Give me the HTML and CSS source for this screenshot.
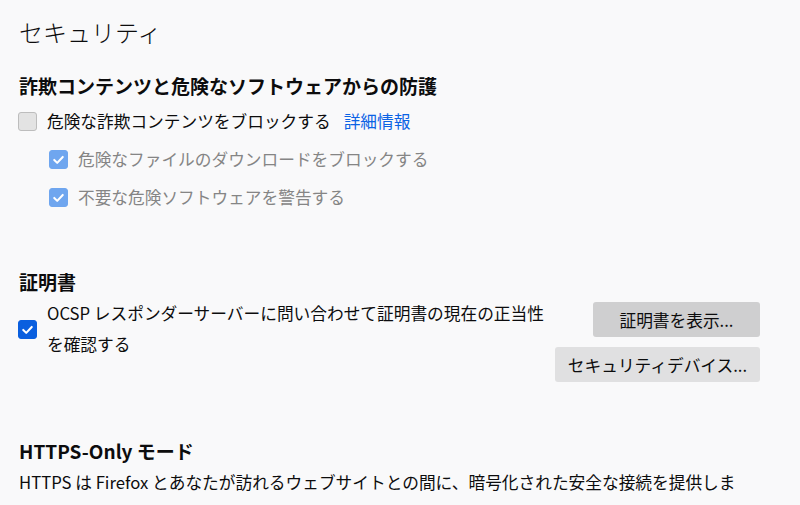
FILE: index.html
```html
<!DOCTYPE html>
<html lang="ja">
<head>
  <meta charset="UTF-8">
  <title>セキュリティ</title>
  <link rel="stylesheet" href="styles.css">
</head>
<body>

  <h1 class="page-title">セキュリティ</h1>

  <!-- 詐欺コンテンツ -->
  <h2 class="section-title first">詐欺コンテンツと危険なソフトウェアからの防護</h2>

  <div class="option">
    <span class="checkbox"></span>
    <span class="label">危険な詐欺コンテンツをブロックする</span>
    <a class="link" href="#">詳細情報</a>
  </div>
  <div class="option sub disabled">
    <span class="checkbox checked">
      <svg viewBox="0 0 20 20"><polyline points="5,10.5 8.5,14 15,7"/></svg>
    </span>
    <span class="label">危険なファイルのダウンロードをブロックする</span>
  </div>
  <div class="option sub disabled">
    <span class="checkbox checked">
      <svg viewBox="0 0 20 20"><polyline points="5,10.5 8.5,14 15,7"/></svg>
    </span>
    <span class="label">不要な危険ソフトウェアを警告する</span>
  </div>

  <!-- 証明書 -->
  <h2 class="section-title cert">証明書</h2>

  <div class="cert-row">
    <div class="cert-option">
      <span class="checkbox checked">
        <svg viewBox="0 0 20 20"><polyline points="5,10.5 8.5,14 15,7"/></svg>
      </span>
      <span class="label wrap">OCSP レスポンダーサーバーに問い合わせて証明書の現在の正当性を確認する</span>
    </div>
    <div class="cert-buttons">
      <button class="btn hover">証明書を表示...</button>
      <button class="btn wide">セキュリティデバイス...</button>
    </div>
  </div>

  <!-- HTTPS-Only -->
  <h2 class="section-title https">HTTPS-Only モード</h2>
  <p class="desc">HTTPS は Firefox とあなたが訪れるウェブサイトとの間に、暗号化された安全な接続を提供します。ほとんどのウェブサイトは HTTPS をサポートしており、HTTPS-Only モードが有効な場合、Firefox はすべての接続を HTTPS にアップグレードします。</p>

</body>
</html>
```

FILE: styles.css
```css
body {
  margin: 0;
  padding: 15px 40px 0 18px;
  background-color: #f9f9fa;
  color: #0c0c0d;
  font-family: "Noto Sans CJK JP", "Noto Sans", sans-serif;
  font-size: 16.7px;
  overflow: hidden;
}

.page-title {
  margin: 0;
  font-size: 24px;
  font-weight: 300;
  line-height: 33px;
  padding-left: 1px;
}

.section-title {
  margin: 0;
  font-size: 19px;
  font-weight: 700;
  line-height: 26px;
  padding-left: 1px;
}

.section-title.first { margin-top: 25px; margin-bottom: 3px; }
.section-title.cert  { margin-top: 53px; margin-bottom: 3px; }
.section-title.https { margin-top: 56px; }

.option {
  display: flex;
  align-items: center;
  height: 38px;
}

.option.sub {
  padding-left: 31px;
}

.option.disabled .label {
  color: #858585;
}

.checkbox {
  flex: none;
  width: 19px;
  height: 19px;
  box-sizing: border-box;
  border: 1px solid #bdbdbd;
  border-radius: 3px;
  background-color: #e3e3e3;
  margin-right: 10px;
  display: flex;
  align-items: center;
  justify-content: center;
}

.checkbox.checked {
  background-color: #0a5fdf;
  border-color: #0a5fdf;
}

.option.disabled .checkbox.checked {
  background-color: #6fa6ef;
  border-color: #6fa6ef;
}

.checkbox svg {
  width: 19px;
  height: 19px;
  fill: none;
  stroke: #fff;
  stroke-width: 2.4;
  stroke-linecap: round;
  stroke-linejoin: round;
}

.label {
  line-height: 24px;
}

.link {
  margin-left: 13px;
  color: #0b63e5;
  text-decoration: none;
}

.cert-row {
  display: flex;
  align-items: flex-start;
}

.cert-option {
  flex: 1;
  display: flex;
  align-items: center;
  margin-right: 4px;
}

.label.wrap {
  line-height: 31px;
}

.cert-buttons {
  display: flex;
  flex-direction: column;
  align-items: flex-end;
  gap: 10px;
  margin-top: 4px;
}

.btn {
  height: 35px;
  width: 167px;
  border: none;
  border-radius: 3px;
  background-color: #e0e0e1;
  color: #0c0c0d;
  font-family: inherit;
  font-size: 16.7px;
  padding: 0;
}

.btn.hover { background-color: #cfcfd0; }
.btn.wide  { width: 205px; }

.desc {
  margin: 3px 15px 0 0;
  line-height: 31px;
  padding-left: 1px;
}
```
